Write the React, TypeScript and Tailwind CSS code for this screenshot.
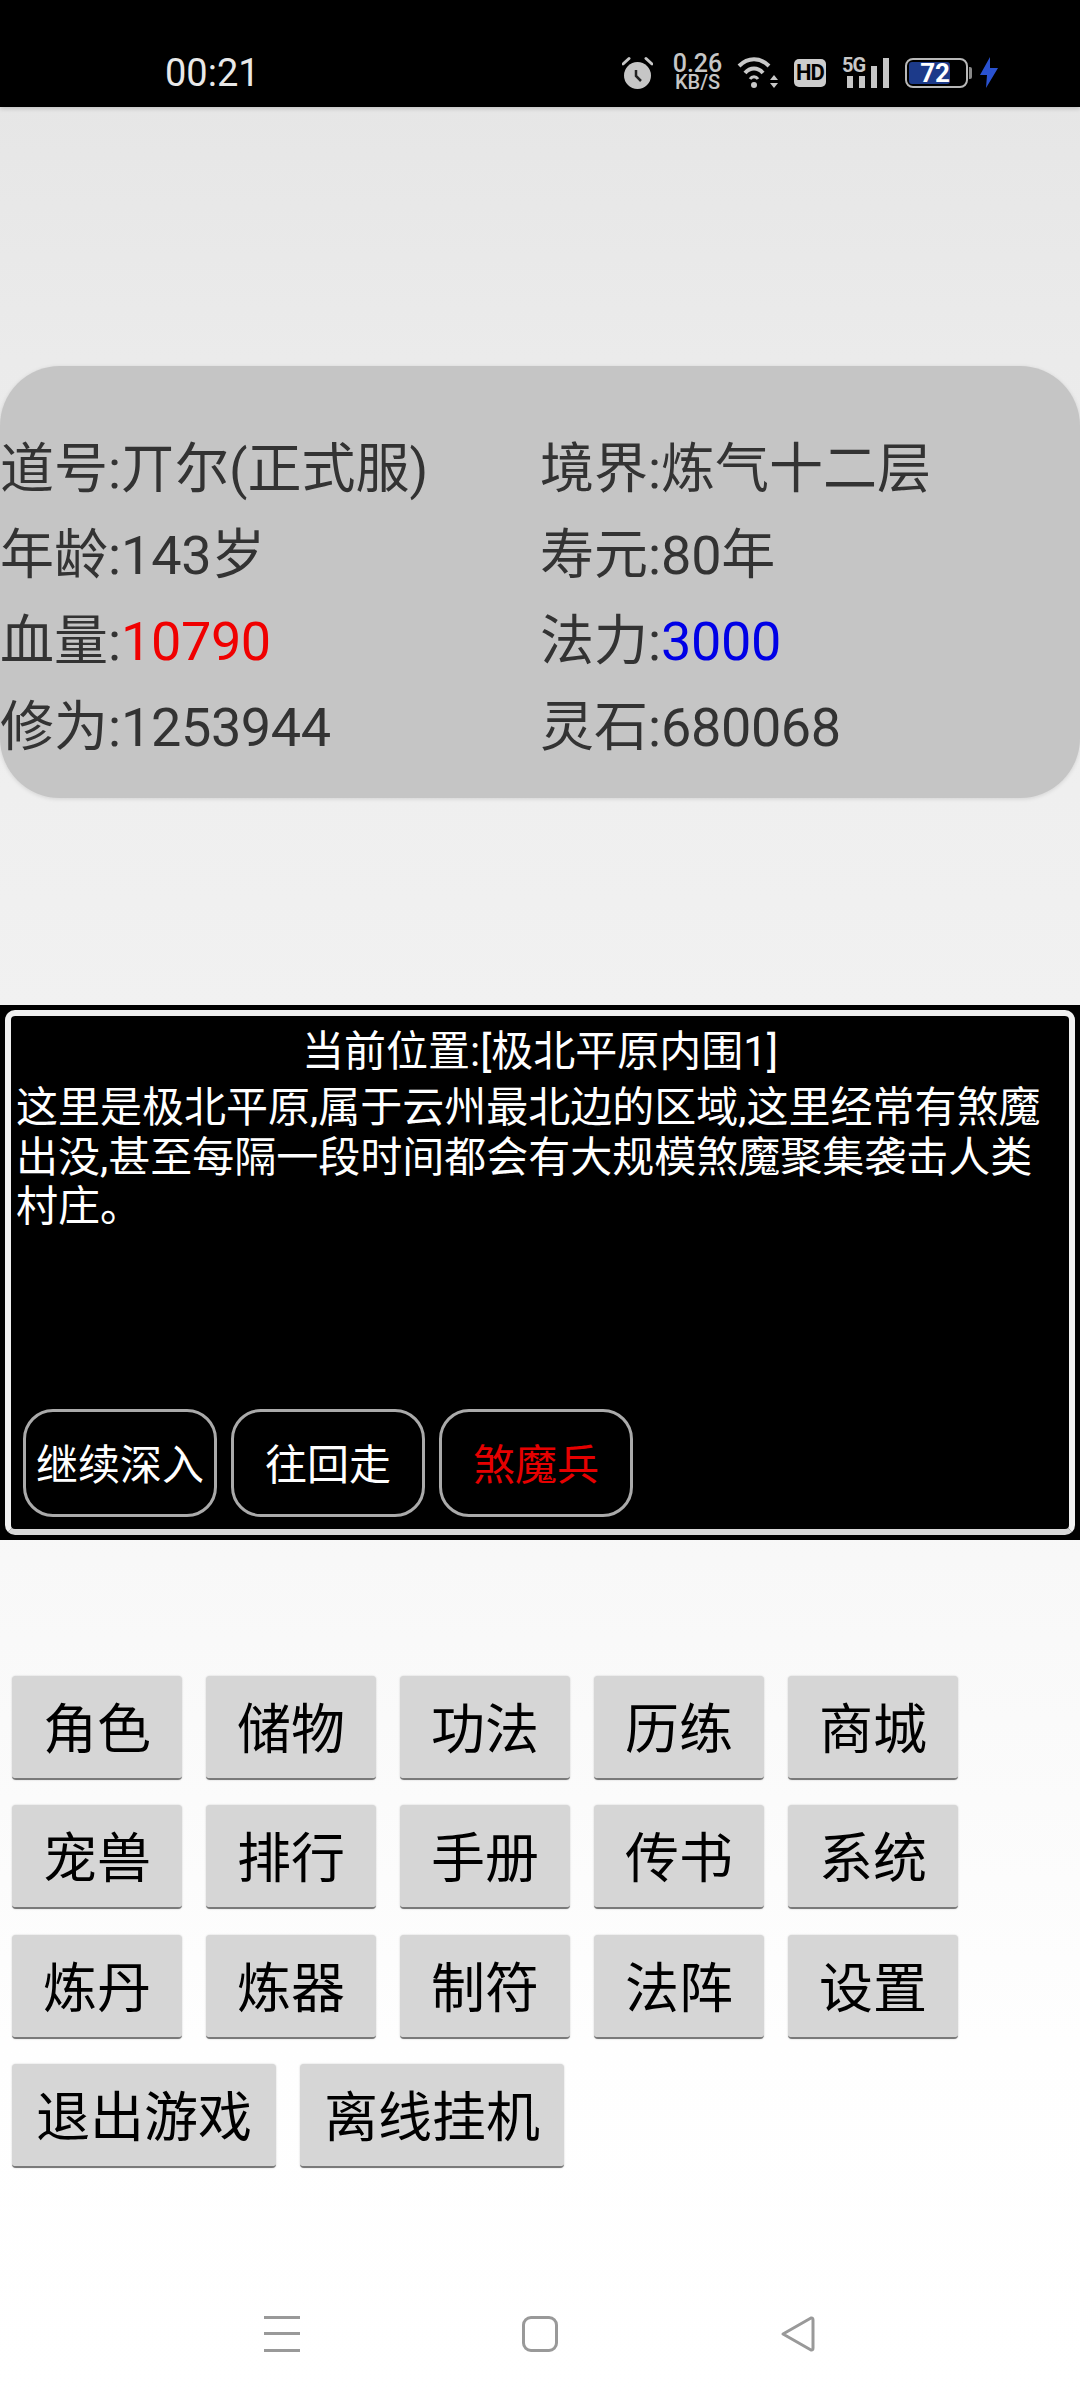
const stats = [
  { label: '道号:', value: '丌尔(正式服)', color: '' },
  { label: '境界:', value: '炼气十二层', color: '' },
  { label: '年龄:', value: '143岁', color: 'tracking-[-0.3px]' },
  { label: '寿元:', value: '80年', color: 'tracking-[-0.3px]' },
  { label: '血量:', value: '10790', color: 'text-[#f00000] tracking-[-0.4px]' },
  { label: '法力:', value: '3000', color: 'text-[#0000e6] tracking-[-0.4px]' },
  { label: '修为:', value: '1253944', color: 'tracking-[-0.4px]' },
  { label: '灵石:', value: '680068', color: 'tracking-[-0.4px]' },
];

const menuRows = [
  ['角色', '储物', '功法', '历练', '商城'],
  ['宠兽', '排行', '手册', '传书', '系统'],
  ['炼丹', '炼器', '制符', '法阵', '设置'],
];

function StatusBar() {
  return (
    <div className="h-[107px] bg-black flex items-center pl-[165px] pt-[38px] shrink-0 shadow-[0_2px_4px_rgba(0,0,0,0.15)]">
      <span className="text-[38px] leading-none text-[#e8e8e8]">00:21</span>

      {/* alarm */}
      <svg className="ml-auto" width="31" height="33" viewBox="0 0 31 33">
        <circle cx="15.5" cy="19.5" r="13.5" fill="#c6c6c6" />
        <path d="M1 8 L7 2.5 M30 8 L24 2.5" stroke="#c6c6c6" strokeWidth="3" strokeLinecap="round" />
        <path d="M14 14 L14 20 L19 25" stroke="#222" strokeWidth="2.5" fill="none" />
      </svg>

      <div className="ml-[20px] w-[49px] flex flex-col items-center text-[#c6c6c6] font-medium">
        <span className="text-[25px] leading-[20px]">0.26</span>
        <span className="text-[20px] leading-[17px]">KB/S</span>
      </div>

      {/* wifi */}
      <svg className="ml-[15px]" width="41" height="33" viewBox="0 0 41 33">
        <path d="M2 10 C11 1 23 1 32 10" stroke="#c8c8c8" strokeWidth="4" fill="none" />
        <path d="M8 17 C13 11 21 11 26 17" stroke="#c8c8c8" strokeWidth="4" fill="none" />
        <path d="M13 23 C15 20 19 20 21 23" stroke="#c8c8c8" strokeWidth="3" fill="none" />
        <circle cx="17" cy="29" r="3" fill="#c8c8c8" />
        <path d="M33 24 L37 19 L41 24 Z M33 27 L41 27 L37 32 Z" fill="#c8c8c8" />
      </svg>

      <div className="ml-[16px] w-[32px] h-[28px] rounded-[5px] bg-[#cccccc] flex items-center justify-center text-[22px] leading-none font-bold text-black tracking-[-1px]">
        HD
      </div>

      {/* 5G signal */}
      <div className="ml-[16px] relative w-[47px] h-[32px] flex items-end pl-[5px] pb-[1px] gap-[6px]">
        <span className="absolute left-0 -top-[2px] text-[20px] leading-none font-bold text-[#c8c8c8] tracking-[-1px]">5G</span>
        <div className="w-[6px] h-[12px] bg-[#c6c6c6]" />
        <div className="w-[6px] h-[12px] bg-[#c6c6c6]" />
        <div className="w-[7px] h-[22px] bg-[#c6c6c6]" />
        <div className="w-[6px] h-[30px] bg-[#c6c6c6]" />
      </div>

      {/* battery */}
      <div className="ml-[16px] w-[63px] h-[30px] rounded-[8px] border-2 border-[#b8b8b8] p-[2px] flex">
        <div className="w-[41px] rounded-[3px] bg-[#1c3a8a] flex items-center justify-end text-[26px] leading-none font-bold text-white">
          72
        </div>
      </div>
      <div className="ml-[1px] w-[3px] h-[12px] bg-[#888888] rounded-r-[2px]" />

      {/* bolt */}
      <svg className="ml-[8px] mr-[82px]" width="18" height="31" viewBox="0 0 18 31">
        <path d="M10 0 L0 18 L7 18 L6 31 L18 11 L10 11 Z" fill="#2a52d0" />
      </svg>
    </div>
  );
}

function StatsCard() {
  return (
    <div className="mt-[259px] h-[432px] pt-[61px] bg-[#c5c5c5] rounded-[60px] shadow-[0_1px_4px_rgba(0,0,0,0.12)] grid grid-cols-[540px_1fr] auto-rows-[86px]">
      {stats.map((s) => (
        <div key={s.label} className="text-[54px] leading-[86px] text-[#333333] whitespace-nowrap">
          {s.label}
          <span className={s.color}>{s.value}</span>
        </div>
      ))}
    </div>
  );
}

function ActionButton({ label, red }: { label: string; red?: boolean }) {
  return (
    <button
      className={`w-[194px] h-[108px] pt-[5px] rounded-[30px] border-[3px] border-[#aaaaaa] bg-black text-[42px] leading-none flex items-center justify-center ${
        red ? 'text-[#e60000]' : 'text-white'
      }`}
    >
      {label}
    </button>
  );
}

function LocationPanel() {
  return (
    <div className="mt-[207px] h-[535px] bg-black p-[5px]">
      <div className="h-full rounded-[10px] border-[6px] border-[#f0f0f0] border-b-[#d8d8d8] bg-black flex flex-col px-[5px] pt-[11px] pb-[12px]">
        <div className="text-[42px] leading-[50px] text-white text-center">当前位置:[极北平原内围1]</div>
        <p className="mt-[6px] text-[42px] leading-[49.5px] text-white">
          这里是极北平原,属于云州最北边的区域,这里经常有煞魔出没,甚至每隔一段时间都会有大规模煞魔聚集袭击人类村庄。
        </p>
        <div className="mt-auto flex gap-[14px] pl-[7px]">
          <ActionButton label="继续深入" />
          <ActionButton label="往回走" />
          <ActionButton label="煞魔兵" red />
        </div>
      </div>
    </div>
  );
}

function MenuButton({ label, wide }: { label: string; wide?: boolean }) {
  return (
    <button
      className={`${
        wide ? 'w-[264px]' : 'w-[170px]'
      } h-[104px] pt-[8px] rounded-[4px] bg-[#d6d6d6] border-b-2 border-[#7a7a7a] shadow-[0_0_2px_rgba(0,0,0,0.2)] text-[54px] leading-none text-black flex items-center justify-center`}
    >
      {label}
    </button>
  );
}

function GameMenu() {
  return (
    <div className="mt-[136px] pl-[12px] flex flex-col gap-[25.3px]">
      {menuRows.map((row) => (
        <div key={row[0]} className="flex gap-[24px]">
          {row.map((label) => (
            <MenuButton key={label} label={label} />
          ))}
        </div>
      ))}
      <div className="flex gap-[24px]">
        <MenuButton label="退出游戏" wide />
        <MenuButton label="离线挂机" wide />
      </div>
    </div>
  );
}

function NavBar() {
  return (
    <div className="mt-[148px] pl-[264px] flex items-center gap-[222px]">
      <div className="w-[36px] h-[36px] flex flex-col justify-between">
        <div className="h-[3px] bg-[#999999]" />
        <div className="h-[3px] bg-[#999999]" />
        <div className="h-[3px] bg-[#999999]" />
      </div>
      <div className="w-[36px] h-[36px] rounded-[9px] border-[3px] border-[#999999]" />
      <svg width="35" height="36" viewBox="0 0 35 36">
        <path d="M3 18 L31 2 Q33 1.5 33 4 L33 32 Q33 34.5 31 34 Z" stroke="#999999" strokeWidth="3" strokeLinejoin="round" fill="none" />
      </svg>
    </div>
  );
}

export default function App() {
  return (
    <div className="w-[1080px] h-[2400px] overflow-hidden flex flex-col bg-[linear-gradient(to_bottom,#e4e4e4_0%,#ebebeb_15%,#f1f1f1_42%,#f8f8f8_65%,#fefefe_85%,#ffffff_100%)] font-['Roboto','Noto_Sans_CJK_SC',sans-serif]">
      <StatusBar />
      <StatsCard />
      <LocationPanel />
      <GameMenu />
      <NavBar />
    </div>
  );
}
